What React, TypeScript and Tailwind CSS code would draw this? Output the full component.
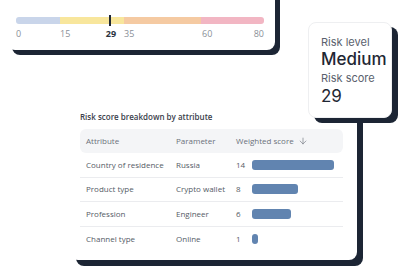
import { ArrowDown } from "lucide-react";

const segments = [
  { w: "w-[44px]", color: "bg-[#c9d5ea]" },
  { w: "w-[64px]", color: "bg-[#f8e69c]" },
  { w: "w-[77px]", color: "bg-[#f5caa2]" },
  { w: "w-[63px]", color: "bg-[#f2b6c3]" },
];

const rows = [
  { attr: "Country of residence", param: "Russia", score: 14, bar: "w-[82px]" },
  { attr: "Product type", param: "Crypto wallet", score: 8, bar: "w-[46px]" },
  { attr: "Profession", param: "Engineer", score: 6, bar: "w-[39px]" },
  { attr: "Channel type", param: "Online", score: 1, bar: "w-[6px]" },
];

function ScaleCard() {
  return (
    <div className="absolute left-[7px] top-[-20px] w-[268px] h-[70px] bg-white rounded-lg shadow-[5px_5px_0_#1c2534] pl-[9px] pt-[37px]">
      <div className="relative w-[248px]">
        <div className="flex h-[7px] rounded-[3px] overflow-hidden">
          {segments.map((s, i) => (
            <div key={i} className={`${s.w} ${s.color}`} />
          ))}
        </div>
        {/* current score marker */}
        <div className="absolute left-[93px] top-[-2px] w-[2px] h-[11px] bg-[#1f2733]" />
        <div className="flex mt-[3px] text-[9px] leading-[14px] text-[#8a8f98] font-['Open_Sans',sans-serif]">
          <span className="w-[44px]">0</span>
          <span className="w-[38px]">15</span>
          <span className="w-[26px] text-center font-bold text-[#2b3340]">29</span>
          <span className="w-[78px]">35</span>
          <span className="flex-1">60</span>
          <span>80</span>
        </div>
      </div>
    </div>
  );
}

function RiskCard() {
  return (
    <div className="absolute left-[308px] top-[22px] w-[84px] h-[96px] bg-white rounded-lg border border-[#eeeff1] shadow-[6px_5px_0_#1c2534] pl-[12px] pt-[12px] font-['Inter',sans-serif] z-10">
      <div className="text-[11px] leading-[14px] text-[#5a616d]">Risk level</div>
      <div className="text-[17px] leading-[20px] font-medium text-[#1f2733]">Medium</div>
      <div className="text-[11px] leading-[14px] text-[#5a616d] mt-[2px]">Risk score</div>
      <div className="text-[17px] leading-[22px] text-[#1f2733]">29</div>
    </div>
  );
}

function BreakdownCard() {
  return (
    <div className="absolute left-[70px] top-[100px] w-[287px] h-[160px] bg-white rounded-lg shadow-[6px_6px_0_#1c2534] pl-[10px] pr-[14px] pt-[11px] font-['Open_Sans',sans-serif]">
      <div className="text-[8px] leading-[12px] font-semibold text-[#3a404b]">
        Risk score breakdown by attribute
      </div>
      <div className="mt-[6px] grid grid-cols-[90px_60px_1fr] items-center h-[24px] bg-[#f4f5f7] rounded-md pl-[6px] text-[8px] text-[#6b717b]">
        <span>Attribute</span>
        <span>Parameter</span>
        <span className="flex items-center gap-[4px]">
          Weighted score
          <ArrowDown className="w-[10px] h-[10px] text-[#6b717b]" strokeWidth={1.5} />
        </span>
      </div>
      {rows.map((r, i) => (
        <div
          key={r.attr}
          className={`grid grid-cols-[90px_60px_1fr] items-center h-[24.5px] pl-[6px] text-[8px] text-[#555b66] ${i < rows.length - 1 ? "border-b border-[#ebecef]" : ""}`}
        >
          <span className="whitespace-nowrap">{r.attr}</span>
          <span className="whitespace-nowrap">{r.param}</span>
          <span className="flex items-center">
            <span className="w-[16px]">{r.score}</span>
            <span className={`${r.bar} h-[10px] rounded-[3px] bg-[#6184b0]`} />
          </span>
        </div>
      ))}
    </div>
  );
}

export default function App() {
  return (
    <div className="relative w-[400px] h-[267px] overflow-hidden bg-white">
      <ScaleCard />
      <BreakdownCard />
      <RiskCard />
    </div>
  );
}
